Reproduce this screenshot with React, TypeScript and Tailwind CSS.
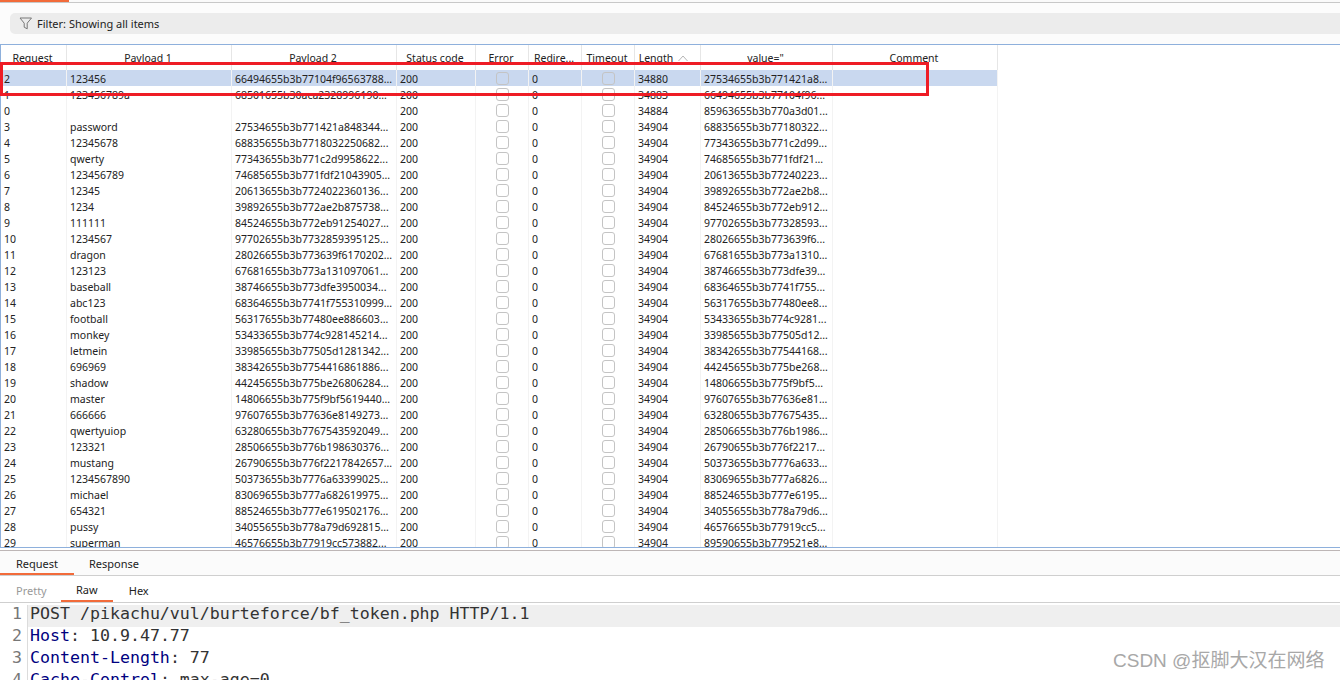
const rows: [string, string, string, string, string][] = [
  ["2", "123456", "66494655b3b77104f96563788...", "34880", "27534655b3b771421a8..."],
  ["1", "123456789a", "68501655b30aca2328996190...", "34883", "66494655b3b77104f96..."],
  ["0", "", "", "34884", "85963655b3b770a3d01..."],
  ["3", "password", "27534655b3b771421a848344...", "34904", "68835655b3b77180322..."],
  ["4", "12345678", "68835655b3b7718032250682...", "34904", "77343655b3b771c2d99..."],
  ["5", "qwerty", "77343655b3b771c2d9958622...", "34904", "74685655b3b771fdf21..."],
  ["6", "123456789", "74685655b3b771fdf21043905...", "34904", "20613655b3b77240223..."],
  ["7", "12345", "20613655b3b7724022360136...", "34904", "39892655b3b772ae2b8..."],
  ["8", "1234", "39892655b3b772ae2b875738...", "34904", "84524655b3b772eb912..."],
  ["9", "111111", "84524655b3b772eb91254027...", "34904", "97702655b3b77328593..."],
  ["10", "1234567", "97702655b3b7732859395125...", "34904", "28026655b3b773639f6..."],
  ["11", "dragon", "28026655b3b773639f6170202...", "34904", "67681655b3b773a1310..."],
  ["12", "123123", "67681655b3b773a131097061...", "34904", "38746655b3b773dfe39..."],
  ["13", "baseball", "38746655b3b773dfe3950034...", "34904", "68364655b3b7741f755..."],
  ["14", "abc123", "68364655b3b7741f755310999...", "34904", "56317655b3b77480ee8..."],
  ["15", "football", "56317655b3b77480ee886603...", "34904", "53433655b3b774c9281..."],
  ["16", "monkey", "53433655b3b774c928145214...", "34904", "33985655b3b77505d12..."],
  ["17", "letmein", "33985655b3b77505d1281342...", "34904", "38342655b3b77544168..."],
  ["18", "696969", "38342655b3b7754416861886...", "34904", "44245655b3b775be268..."],
  ["19", "shadow", "44245655b3b775be26806284...", "34904", "14806655b3b775f9bf5..."],
  ["20", "master", "14806655b3b775f9bf5619440...", "34904", "97607655b3b77636e81..."],
  ["21", "666666", "97607655b3b77636e8149273...", "34904", "63280655b3b77675435..."],
  ["22", "qwertyuiop", "63280655b3b7767543592049...", "34904", "28506655b3b776b1986..."],
  ["23", "123321", "28506655b3b776b198630376...", "34904", "26790655b3b776f2217..."],
  ["24", "mustang", "26790655b3b776f2217842657...", "34904", "50373655b3b7776a633..."],
  ["25", "1234567890", "50373655b3b7776a63399025...", "34904", "83069655b3b777a6826..."],
  ["26", "michael", "83069655b3b777a682619975...", "34904", "88524655b3b777e6195..."],
  ["27", "654321", "88524655b3b777e619502176...", "34904", "34055655b3b778a79d6..."],
  ["28", "pussy", "34055655b3b778a79d692815...", "34904", "46576655b3b77919cc5..."],
  ["29", "superman", "46576655b3b77919cc573882...", "34904", "89590655b3b779521e8..."],
];

const grid = "grid grid-cols-[66px_165px_165px_79px_53px_53px_53px_66px_132px_165px] w-[997px]";
const sep = "border-r border-[#f3f3f3] overflow-hidden whitespace-nowrap";

function Box() {
  return <span className="block w-[13px] h-[13px] rounded-[3px] border border-[#c4c4c4]" />;
}

function Head({ children }: { children: React.ReactNode }) {
  return (
    <div className="relative flex items-center justify-center border-r border-[#e6e6e6] h-[25px] pt-[2px] pr-[2px] whitespace-nowrap">
      {children}
    </div>
  );
}

export default function App() {
  return (
    <div className="relative w-[1340px] h-[680px] overflow-hidden bg-white text-[10.5px] text-[#222] font-['Noto_Sans',sans-serif] flex flex-col">
      <div className="shrink-0 h-[3px] border-b border-[#c8c8c8] bg-[#fafafa]">
        <div className="w-[69px] h-[2px] bg-[#f26b3a]" />
      </div>

      <div className="shrink-0 h-[41px] pt-[10px] pl-[10px] bg-[#fcfcfc]">
        <div className="h-[21px] rounded-l-[5px] bg-[#ececec] flex items-center pl-[9px] gap-[4px] text-[11px] text-[#222]">
          <svg width="14" height="13" viewBox="0 0 14 13" fill="none" stroke="#777" strokeWidth="1">
            <path d="M1 1h11.5L8.2 6.2v5.6l-3-1.6V6.2z" />
          </svg>
          <span className="pt-[1px]">Filter: Showing all items</span>
        </div>
      </div>

      <div className="shrink-0 h-[504px] border-y border-l border-[#8eb0dc] overflow-hidden bg-white">
        <div className={grid}>
          <Head>Request</Head>
          <Head>Payload 1</Head>
          <Head>Payload 2</Head>
          <Head>Status code</Head>
          <Head>Error</Head>
          <Head>Redire...</Head>
          <Head>Timeout</Head>
          <Head>
            <span className="-ml-[6px]">Length</span>
            <svg className="ml-[5px]" width="10" height="7" viewBox="0 0 10 7" fill="none" stroke="#b5b5b5" strokeWidth="1">
              <path d="M0.5 6L5 1l4.5 5" />
            </svg>
          </Head>
          <Head>value="</Head>
          <Head>Comment</Head>
        </div>
        {rows.map((r, i) => (
          <div key={r[0]} className={`${grid} h-[16px] leading-[19px] ${i === 0 ? "bg-[#c9d8ef]" : ""}`}>
            <div className={`${sep} pl-[3px]`}>{r[0]}</div>
            <div className={`${sep} pl-[3px]`}>{r[1]}</div>
            <div className={`${sep} pl-[3px]`}>{r[2]}</div>
            <div className={`${sep} pl-[3px]`}>200</div>
            <div className={`${sep} flex items-center justify-center`}><Box /></div>
            <div className={`${sep} pl-[3px]`}>0</div>
            <div className={`${sep} flex items-center justify-center`}><Box /></div>
            <div className={`${sep} pl-[3px]`}>{r[3]}</div>
            <div className={`${sep} pl-[3px]`}>{r[4]}</div>
            <div className={sep} />
          </div>
        ))}
      </div>

      <div className="shrink-0 h-[2px] bg-white" />
      <div className="shrink-0 h-[1px] bg-[#bdb6b6]" />

      <div className="shrink-0 h-[25px] flex bg-[#fbfbfb] border-b border-[#cfcfcf] text-[11px]">
        <div className="w-[74px] h-[24px] flex items-center justify-center border-b-2 border-[#f26b3a] pt-[4px]">Request</div>
        <div className="ml-[15px] flex items-center h-[24px] pt-[2px]">Response</div>
      </div>

      <div className="shrink-0 h-[27px] flex border-b border-[#cfcfcf] text-[11px]">
        <div className="ml-[16px] flex items-center h-[26px] pt-[4px] text-[#999]">Pretty</div>
        <div className="ml-[14px] w-[52px] h-[26px] flex items-center justify-center border-b-2 border-[#f26b3a] pt-[4px]">Raw</div>
        <div className="ml-[16px] flex items-center h-[26px] pt-[4px]">Hex</div>
      </div>

      <div className="shrink-0 mt-[2px] font-['DejaVu_Sans_Mono',monospace] text-[16.6px] leading-[18px] text-[#333]">
        {[
          [<span key="a">POST /pikachu/vul/burteforce/bf_token.php HTTP/1.1</span>, true],
          [<span key="b"><span className="text-[#000080]">Host</span>: 10.9.47.77</span>, false],
          [<span key="c"><span className="text-[#000080]">Content-Length</span>: 77</span>, false],
          [<span key="d"><span className="text-[#000080]">Cache-Control</span>: max-age=0</span>, false],
        ].map(([line, active], i) => (
          <div key={i} className={`flex h-[22px] ${active ? "bg-[#efefef]" : ""}`}>
            <div className="w-[28px] pr-[5px] text-right text-[#777] border-r border-[#dcdcdc] bg-white">{i + 1}</div>
            <div className="pl-[2px] whitespace-pre">{line}</div>
          </div>
        ))}
      </div>

      <div className="absolute left-0 top-[62px] w-[929px] h-[34px] border-[3px] border-[#ee1c25]" />
      <div className="absolute left-[1113px] top-[647px] whitespace-nowrap text-[19px] leading-[28px] text-[#a8a8a8] font-['Liberation_Sans','Noto_Sans_CJK_SC',sans-serif]">
        CSDN @抠脚大汉在网络
      </div>
    </div>
  );
}
